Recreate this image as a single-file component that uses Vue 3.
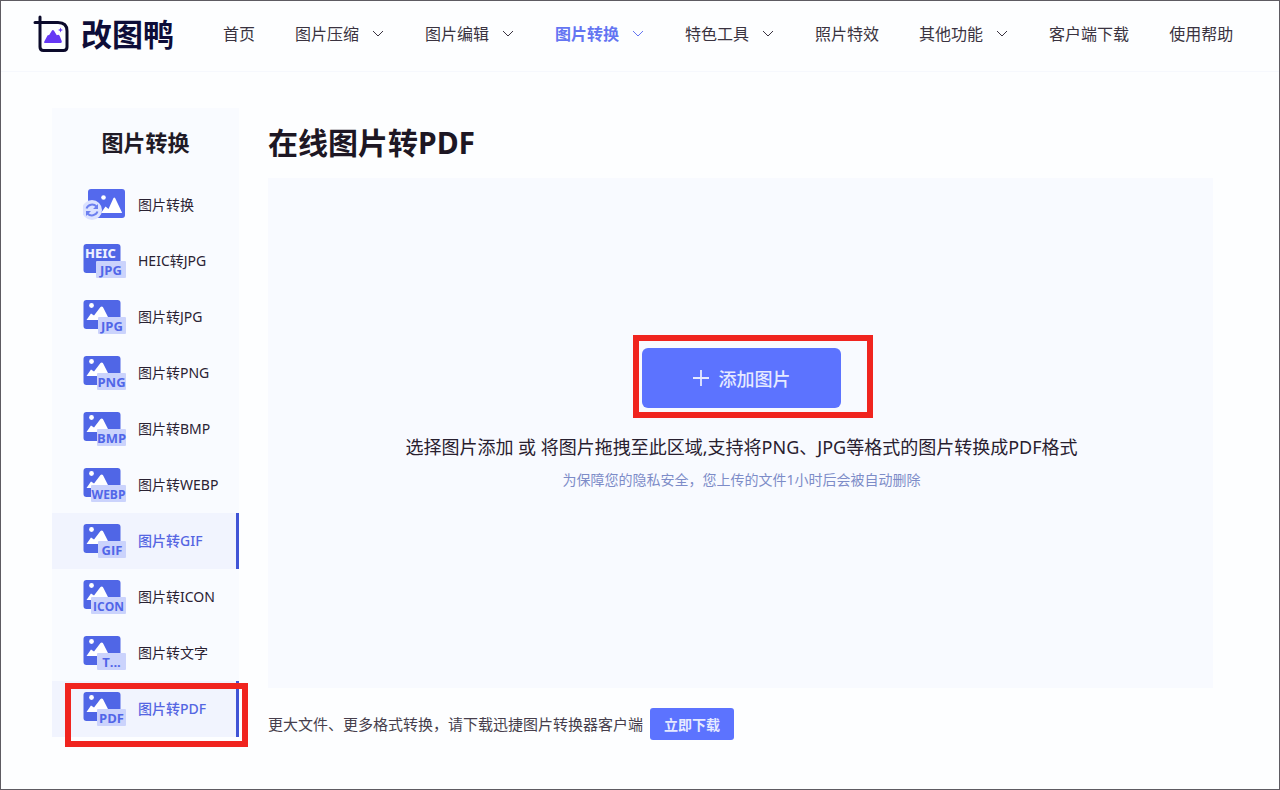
<script setup>
const navItems = [
  { label: '首页' },
  { label: '图片压缩', menu: true },
  { label: '图片编辑', menu: true },
  { label: '图片转换', menu: true, active: true },
  { label: '特色工具', menu: true },
  { label: '照片特效' },
  { label: '其他功能', menu: true },
  { label: '客户端下载' },
  { label: '使用帮助' },
]

const tools = [
  { label: '图片转换', kind: 'convert' },
  { label: 'HEIC转JPG', kind: 'heic', badge: 'JPG', x: 13 },
  { label: '图片转JPG', kind: 'image', badge: 'JPG', x: 15 },
  { label: '图片转PNG', kind: 'image', badge: 'PNG', x: 14 },
  { label: '图片转BMP', kind: 'image', badge: 'BMP', x: 14 },
  { label: '图片转WEBP', kind: 'image', badge: 'WEBP', x: 8, long: true },
  { label: '图片转GIF', kind: 'image', badge: 'GIF', x: 15, active: true },
  { label: '图片转ICON', kind: 'image', badge: 'ICON', x: 8, long: true },
  { label: '图片转文字', kind: 'image', badge: 'T...', x: 14 },
  { label: '图片转PDF', kind: 'image', badge: 'PDF', x: 14, active: true, marked: true },
]
</script>

<template>
  <div class="page">
    <header class="header">
      <a class="logo" href="#">
        <svg class="logo-mark" viewBox="0 0 36 38" aria-hidden="true">
          <path d="M2 7.500H25Q34 7.500 34 16V32Q34 35.500 30.500 35.500H10.500Q7 35.500 7 32V2" fill="none" stroke="#0b0a2b" stroke-width="3" stroke-linecap="round" stroke-linejoin="round" />
          <path d="M12 28Q10.500 28 11.300 26.500L14.500 20.500Q15.200 19.600 16 20.300L19 15.400Q20 14.300 21 15.700L23.800 20.200Q25.600 19 26.600 20.700L28.800 26.300Q29.100 28 27.600 28Z" fill="#6537f4" />
          <path d="M27.500 12.500L28.200 14.300L30 15L28.200 15.700L27.500 17.500L26.800 15.700L25 15L26.800 14.300Z" fill="#6537f4" />
        </svg>
        <span class="logo-text">改图鸭</span>
      </a>
      <nav class="nav">
        <a v-for="item in navItems" :key="item.label" href="#" class="nav-link" :class="{ active: item.active }">
          {{ item.label }}
          <svg v-if="item.menu" class="chevron" viewBox="0 0 14 14" aria-hidden="true">
            <path d="M2 4L7 9L12 4" fill="none" stroke="currentColor" stroke-width="1" />
          </svg>
        </a>
      </nav>
    </header>

    <div class="content">
      <aside class="sidebar">
        <h2 class="sidebar-title">图片转换</h2>
        <a v-for="tool in tools" :key="tool.label" href="#" class="tool" :class="{ active: tool.active }">
          <svg class="tool-icon" viewBox="0 0 44 36" aria-hidden="true">
            <template v-if="tool.kind === 'convert'">
              <rect x="5" y="2" width="37" height="29" rx="3" fill="#5469ed" />
              <circle cx="20.500" cy="10.500" r="2.300" fill="#fff" />
              <path d="M18 26L22.500 19.500L25.500 22L30.500 11Q31.300 9.800 32.100 11L39 25.500Q39 26 38 26Z" fill="#fff" />
              <circle cx="9" cy="23" r="10" fill="#dce2ff" />
              <path d="M3.500 21.500A6 6 0 0 1 13.500 19.500M14.500 24.500A6 6 0 0 1 4.500 26.500" fill="none" stroke="#6d80f0" stroke-width="2" />
              <path d="M15 17V22H10ZM3 29V24H8Z" fill="#6d80f0" />
            </template>
            <template v-else>
              <rect x="0.500" y="1" width="37" height="29" rx="3" fill="#5066e6" />
              <text v-if="tool.kind === 'heic'" x="2" y="15" class="heic">HEIC</text>
              <template v-else>
                <circle cx="8.500" cy="6.500" r="2.400" fill="#fff" />
                <path d="M3.500 21L8 14.500L11 16.500L17.500 8Q18.700 6.800 19.900 8L26 20V21Z" fill="#fff" />
              </template>
              <rect :x="tool.x" y="18" :width="43 - tool.x" height="17" rx="1" fill="#cbd3fc" />
              <text :x="(tool.x + 43) / 2" y="31.500" text-anchor="middle" class="badge" :class="{ long: tool.long }">{{ tool.badge }}</text>
            </template>
          </svg>
          <span class="tool-label">{{ tool.label }}</span>
          <i v-if="tool.marked" class="mark mark-tool"></i>
        </a>
      </aside>

      <main class="main">
        <h1 class="title">在线图片转PDF</h1>
        <section class="drop">
          <div class="add-wrap">
            <button type="button" class="add">
              <svg class="plus" viewBox="0 0 16 16" aria-hidden="true">
                <path d="M8 0V16M0 8H16" stroke="currentColor" stroke-width="1.800" />
              </svg>
              添加图片
            </button>
            <i class="mark mark-add"></i>
          </div>
          <p class="hint">选择图片添加 或 将图片拖拽至此区域,支持将PNG、JPG等格式的图片转换成PDF格式</p>
          <p class="privacy">为保障您的隐私安全，您上传的文件1小时后会被自动删除</p>
        </section>
        <div class="client">
          <span class="client-text">更大文件、更多格式转换，请下载迅捷图片转换器客户端</span>
          <button type="button" class="download">立即下载</button>
        </div>
      </main>
    </div>
  </div>
</template>

<style>
body {
  margin: 0;
  background: #fdfeff;
}
</style>

<style scoped>
* {
  box-sizing: border-box;
}

.page {
  min-height: 100vh;
  display: flex;
  flex-direction: column;
  border: 1px solid #5e5b62;
  background: #fdfeff;
  color: #27202f;
  font-family: "Noto Sans", "Noto Sans CJK SC", sans-serif;
}

a {
  color: inherit;
  text-decoration: none;
}

h1,
h2,
p {
  margin: 0;
}

button {
  border: 0;
  font-family: inherit;
  color: #e6eaff;
  background: #5c73ff;
  cursor: pointer;
}

.header {
  height: 71px;
  display: flex;
  align-items: center;
  padding: 0 32px 4px;
  border-bottom: 1px solid #f6f8fd;
}

.logo {
  display: flex;
  align-items: center;
  gap: 12px;
  width: 190px;
  flex: none;
}

.logo-mark {
  width: 36px;
  height: 38px;
}

.logo-text {
  font-size: 31px;
  line-height: 40px;
  font-weight: 700;
  color: #0e0d38;
}

.nav {
  display: flex;
  gap: 40px;
  white-space: nowrap;
}

.nav-link {
  display: flex;
  align-items: center;
  gap: 12px;
  font-size: 16px;
  line-height: 24px;
  color: #3a3340;
}

.nav-link.active {
  color: #6475f2;
  font-weight: 700;
}

.chevron {
  width: 14px;
  height: 14px;
}

.content {
  flex: 1;
  display: grid;
  grid-template-columns: 187px minmax(0, 1fr);
  gap: 29px;
  padding: 36px 66px 49px 51px;
}

.sidebar {
  align-self: start;
  background: #f9fbff;
}

.sidebar-title {
  font-size: 22px;
  line-height: 69px;
  font-weight: 700;
  text-align: center;
  color: #1f1a26;
}

.tool {
  position: relative;
  display: flex;
  align-items: center;
  gap: 11px;
  height: 56px;
  padding-left: 31px;
  font-size: 14px;
  white-space: nowrap;
  color: #2a2233;
}

.tool.active {
  background: #f1f4fe;
  border-right: 3px solid #4054d6;
  color: #5566e2;
  font-weight: 500;
}

.tool-icon {
  flex: none;
  width: 44px;
  height: 36px;
}

.tool-label {
  padding-bottom: 2px;
}

.badge {
  font-family: "Open Sans", sans-serif;
  font-size: 13px;
  font-weight: 700;
  fill: #5166e8;
}

.badge.long {
  font-size: 12px;
}

.heic {
  font-family: "Noto Sans", sans-serif;
  font-size: 13px;
  font-weight: 800;
  fill: #eef1ff;
}

.mark {
  position: absolute;
  border: 6px solid #f0241f;
  pointer-events: none;
}

.mark-tool {
  inset: 2px -12px -10px 13px;
  z-index: 1;
}

.mark-add {
  inset: -13px -32px -10px -9px;
}

.main {
  display: flex;
  flex-direction: column;
}

.title {
  font-size: 30px;
  line-height: 70px;
  font-weight: 700;
  color: #1d1724;
}

.drop {
  flex: 1;
  display: flex;
  flex-direction: column;
  align-items: center;
  padding: 170px 20px 40px 22px;
  background: #f8faff;
}

.add-wrap {
  position: relative;
}

.add {
  display: flex;
  align-items: center;
  justify-content: center;
  gap: 10px;
  width: 199px;
  height: 60px;
  border-radius: 6px;
  font-size: 18px;
  font-weight: 500;
}

.plus {
  width: 16px;
  height: 16px;
}

.hint {
  margin-top: 25px;
  font-size: 18px;
  line-height: 28px;
  color: #28202f;
}

.privacy {
  margin-top: 9px;
  font-size: 14px;
  line-height: 20px;
  color: #7d8cc8;
}

.client {
  display: flex;
  align-items: center;
  gap: 7px;
  margin-top: 20px;
  font-size: 15px;
  color: #463e4c;
}

.client-text {
  padding-bottom: 2px;
}

.download {
  width: 84px;
  height: 32px;
  padding: 0;
  border-radius: 3px;
  font-size: 14px;
  font-weight: 700;
}
</style>
